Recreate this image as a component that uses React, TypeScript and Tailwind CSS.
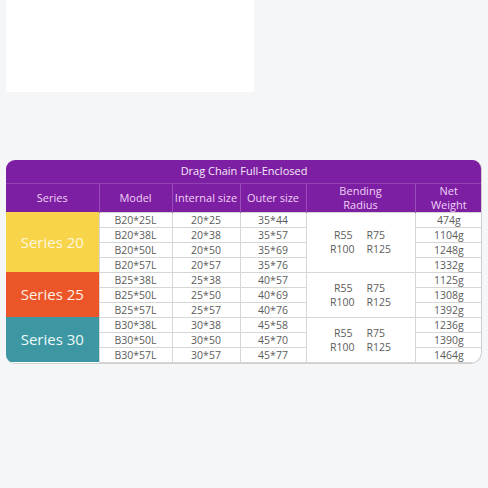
import React from 'react';

type Group = {
  name: string;
  color: string;
  rows: { model: string; internal: string; outer: string; weight: string }[];
};

const groups: Group[] = [
  {
    name: 'Series 20',
    color: 'bg-[#f7d44a] text-[#fff7df]',
    rows: [
      { model: 'B20*25L', internal: '20*25', outer: '35*44', weight: '474g' },
      { model: 'B20*38L', internal: '20*38', outer: '35*57', weight: '1104g' },
      { model: 'B20*50L', internal: '20*50', outer: '35*69', weight: '1248g' },
      { model: 'B20*57L', internal: '20*57', outer: '35*76', weight: '1332g' },
    ],
  },
  {
    name: 'Series 25',
    color: 'bg-[#ec5528] text-[#fff1e6]',
    rows: [
      { model: 'B25*38L', internal: '25*38', outer: '40*57', weight: '1125g' },
      { model: 'B25*50L', internal: '25*50', outer: '40*69', weight: '1308g' },
      { model: 'B25*57L', internal: '25*57', outer: '40*76', weight: '1392g' },
    ],
  },
  {
    name: 'Series 30',
    color: 'bg-[#3c97a2] text-[#eefafa]',
    rows: [
      { model: 'B30*38L', internal: '30*38', outer: '45*58', weight: '1236g' },
      { model: 'B30*50L', internal: '30*50', outer: '45*70', weight: '1390g' },
      { model: 'B30*57L', internal: '30*57', outer: '45*77', weight: '1464g' },
    ],
  },
];

const cell = 'h-[15px] p-0 border border-[#d6d6d6] text-center leading-[14px]';
const head = 'p-0 border-x border-[#9a4cba] text-center font-normal leading-[14px]';

export default function App() {
  return (
    <div
      className="w-[488px] h-[488px] bg-[#f5f6f8] pl-[6px] overflow-hidden"
      style={{ fontFamily: '"Open Sans", "Liberation Sans", sans-serif' }}
    >
      <div className="w-[248px] h-[92px] bg-white" />

      <div className="mt-[68px] w-[476px] rounded-[9px] rounded-br-[12px] overflow-hidden bg-white border-r border-b border-[#cfcfd2]">
        <table className="w-[476px] border-collapse table-fixed text-[10.5px] text-[#5c5c5c]">
          <colgroup>
            <col className="w-[93px]" />
            <col className="w-[73px]" />
            <col className="w-[68px]" />
            <col className="w-[66px]" />
            <col className="w-[109px]" />
            <col className="w-[67px]" />
          </colgroup>
          <thead>
            <tr className="bg-[#7d1fa3]">
              <th colSpan={6} className="h-[23px] p-0 text-[11px] font-normal text-[#f6e9fa] border-b border-[#9241b4]">
                Drag Chain Full-Enclosed
              </th>
            </tr>
            <tr className="bg-[#7d1fa3] text-[#f1d2f7] text-[11px]">
              <th className={`${head} h-[29px] border-l-0`}>Series</th>
              <th className={head}>Model</th>
              <th className={head}>Internal size</th>
              <th className={head}>Outer size</th>
              <th className={head}>
                Bending
                <br />
                Radius
              </th>
              <th className={`${head} border-r-0`}>
                Net
                <br />
                Weight
              </th>
            </tr>
          </thead>
          <tbody>
            {groups.map((g) =>
              g.rows.map((r, i) => (
                <tr key={r.model}>
                  {i === 0 && (
                    <td rowSpan={g.rows.length} className={`${g.color} p-0 text-center text-[15px] border-0`}>
                      {g.name}
                    </td>
                  )}
                  <td className={cell}>{r.model}</td>
                  <td className={cell}>{r.internal}</td>
                  <td className={cell}>{r.outer}</td>
                  {i === 0 && (
                    <td rowSpan={g.rows.length} className="p-0 border border-[#d6d6d6] leading-[14px]">
                      <div className="flex justify-center">
                        <div className="grid grid-cols-[auto_auto] gap-x-[12px] justify-items-start">
                          <span className="pl-[4px]">R55</span>
                          <span>R75</span>
                          <span>R100</span>
                          <span>R125</span>
                        </div>
                      </div>
                    </td>
                  )}
                  <td className={`${cell} border-r-0`}>{r.weight}</td>
                </tr>
              ))
            )}
          </tbody>
        </table>
      </div>
    </div>
  );
}
